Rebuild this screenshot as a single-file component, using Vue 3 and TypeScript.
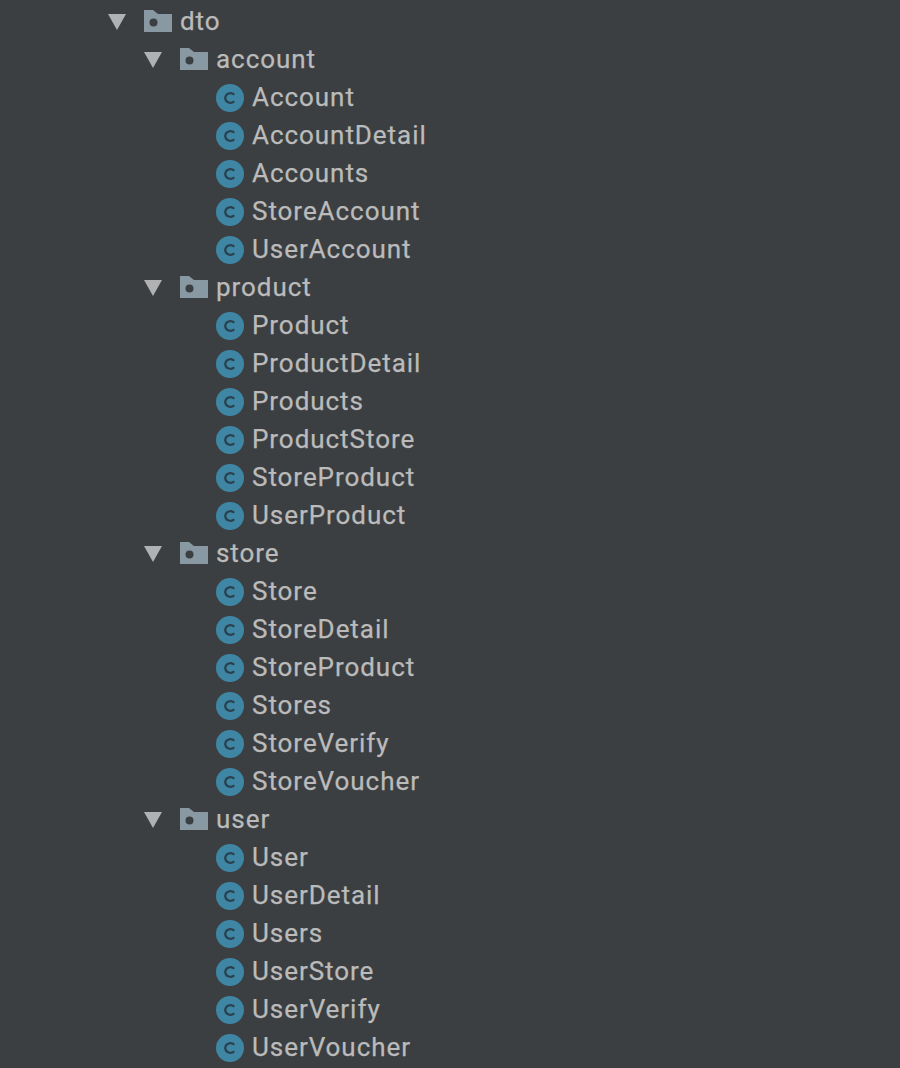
<script setup lang="ts">
interface Group { name: string; items: string[] }
const groups: Group[] = [
  { name: 'account', items: ['Account', 'AccountDetail', 'Accounts', 'StoreAccount', 'UserAccount'] },
  { name: 'product', items: ['Product', 'ProductDetail', 'Products', 'ProductStore', 'StoreProduct', 'UserProduct'] },
  { name: 'store', items: ['Store', 'StoreDetail', 'StoreProduct', 'Stores', 'StoreVerify', 'StoreVoucher'] },
  { name: 'user', items: ['User', 'UserDetail', 'Users', 'UserStore', 'UserVerify', 'UserVoucher'] },
]
</script>

<template>
  <div class="tree">
    <div class="row">
      <svg class="arrow" width="18" height="16" viewBox="0 0 18 16"><path d="M0 0H18L9 16Z" /></svg>
      <svg class="folder" width="28" height="22" viewBox="0 0 28 22"><path class="fill" d="M0 0H9L14 4H28V22H0Z" /><circle class="dot" cx="9.5" cy="12.5" r="4" /></svg>
      <span class="label">dto</span>
    </div>
    <div v-for="g in groups" :key="g.name" class="group">
      <div class="row">
        <svg class="arrow" width="18" height="16" viewBox="0 0 18 16"><path d="M0 0H18L9 16Z" /></svg>
        <svg class="folder" width="28" height="22" viewBox="0 0 28 22"><path class="fill" d="M0 0H9L14 4H28V22H0Z" /><circle class="dot" cx="9.5" cy="12.5" r="4" /></svg>
        <span class="label">{{ g.name }}</span>
      </div>
      <div v-for="item in g.items" :key="item" class="row leaf">
        <svg class="cls" width="28" height="28" viewBox="0 0 28 28">
          <circle class="disc" cx="14" cy="14" r="14" />
          <path class="c" d="M18.2 10.8A5.2 5.2 0 0 0 9.2 14A5.2 5.2 0 0 0 18.2 17.2" />
        </svg>
        <span class="label">{{ item }}</span>
      </div>
    </div>
  </div>
</template>

<style>
html, body { background: #3c3f41; }
</style>

<style scoped>
.tree {
  width: 900px;
  height: 1068px;
  overflow: hidden;
  box-sizing: border-box;
  padding: 2px 0 0 108px;
  background: #3c3f41;
  font-family: Roboto, "Liberation Sans", sans-serif;
  font-size: 26px;
  letter-spacing: 0.95px;
  color: #bbbbbb;
  -webkit-text-stroke: 0.25px #bbbbbb;
}
.group { padding-left: 36px; }
.row { display: flex; align-items: center; height: 38px; }
.leaf { padding-left: 72px; }
.arrow { flex: none; margin: 2px 18px 0 0; fill: #afb1b3; }
.folder { flex: none; margin-right: 8px; }
.fill { fill: #8899a3; }
.dot { fill: #3c3f41; }
.cls { flex: none; margin: 2px 8px 0 0; }
.disc { fill: #3e86a3; }
.c { fill: none; stroke: #2b404d; stroke-width: 2.2; }
.label { line-height: 38px; white-space: nowrap; }
</style>
